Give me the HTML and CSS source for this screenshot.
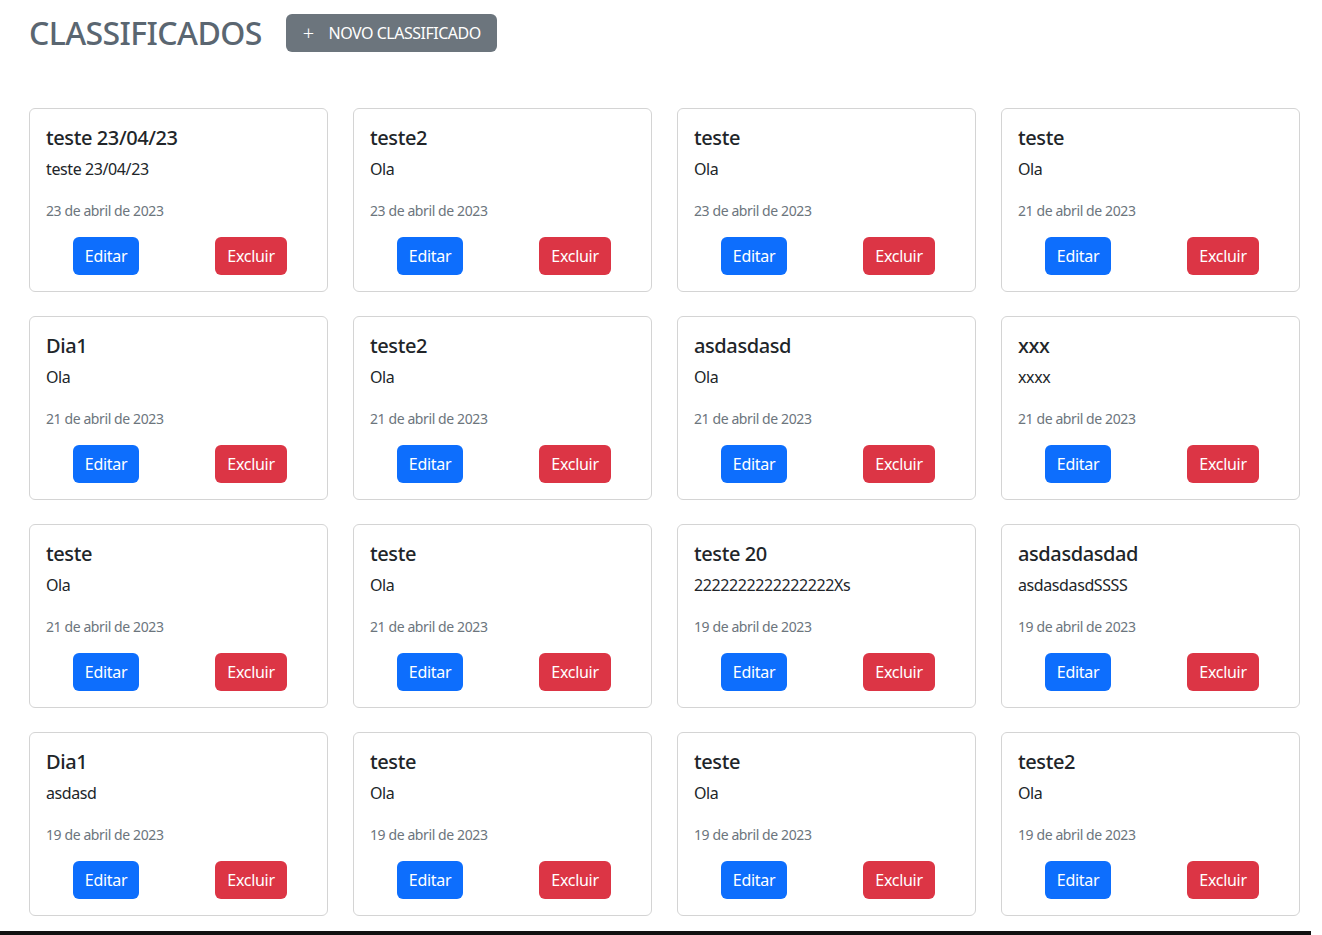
FILE: index.html
```html
<!DOCTYPE html>
<html lang="pt-BR">
<head>
<meta charset="utf-8">
<title>Classificados</title>
<link rel="stylesheet" href="styles.css">
</head>
<body>
<main class="page">
  <header class="top">
    <h1 class="heading">CLASSIFICADOS</h1>
    <button class="btn btn-new"><span class="plus">+</span>NOVO CLASSIFICADO</button>
  </header>
  <section class="grid">
    <article class="card"><h5 class="card-title">teste 23/04/23</h5><p class="card-text">teste 23/04/23</p><p class="card-date"><small>23 de abril de 2023</small></p><div class="actions"><button class="btn btn-edit">Editar</button><button class="btn btn-del">Excluir</button></div></article>
    <article class="card"><h5 class="card-title">teste2</h5><p class="card-text">Ola</p><p class="card-date"><small>23 de abril de 2023</small></p><div class="actions"><button class="btn btn-edit">Editar</button><button class="btn btn-del">Excluir</button></div></article>
    <article class="card"><h5 class="card-title">teste</h5><p class="card-text">Ola</p><p class="card-date"><small>23 de abril de 2023</small></p><div class="actions"><button class="btn btn-edit">Editar</button><button class="btn btn-del">Excluir</button></div></article>
    <article class="card"><h5 class="card-title">teste</h5><p class="card-text">Ola</p><p class="card-date"><small>21 de abril de 2023</small></p><div class="actions"><button class="btn btn-edit">Editar</button><button class="btn btn-del">Excluir</button></div></article>

    <article class="card"><h5 class="card-title">Dia1</h5><p class="card-text">Ola</p><p class="card-date"><small>21 de abril de 2023</small></p><div class="actions"><button class="btn btn-edit">Editar</button><button class="btn btn-del">Excluir</button></div></article>
    <article class="card"><h5 class="card-title">teste2</h5><p class="card-text">Ola</p><p class="card-date"><small>21 de abril de 2023</small></p><div class="actions"><button class="btn btn-edit">Editar</button><button class="btn btn-del">Excluir</button></div></article>
    <article class="card"><h5 class="card-title">asdasdasd</h5><p class="card-text">Ola</p><p class="card-date"><small>21 de abril de 2023</small></p><div class="actions"><button class="btn btn-edit">Editar</button><button class="btn btn-del">Excluir</button></div></article>
    <article class="card"><h5 class="card-title">xxx</h5><p class="card-text">xxxx</p><p class="card-date"><small>21 de abril de 2023</small></p><div class="actions"><button class="btn btn-edit">Editar</button><button class="btn btn-del">Excluir</button></div></article>

    <article class="card"><h5 class="card-title">teste</h5><p class="card-text">Ola</p><p class="card-date"><small>21 de abril de 2023</small></p><div class="actions"><button class="btn btn-edit">Editar</button><button class="btn btn-del">Excluir</button></div></article>
    <article class="card"><h5 class="card-title">teste</h5><p class="card-text">Ola</p><p class="card-date"><small>21 de abril de 2023</small></p><div class="actions"><button class="btn btn-edit">Editar</button><button class="btn btn-del">Excluir</button></div></article>
    <article class="card"><h5 class="card-title">teste 20</h5><p class="card-text">2222222222222222Xs</p><p class="card-date"><small>19 de abril de 2023</small></p><div class="actions"><button class="btn btn-edit">Editar</button><button class="btn btn-del">Excluir</button></div></article>
    <article class="card"><h5 class="card-title">asdasdasdad</h5><p class="card-text">asdasdasdSSSS</p><p class="card-date"><small>19 de abril de 2023</small></p><div class="actions"><button class="btn btn-edit">Editar</button><button class="btn btn-del">Excluir</button></div></article>

    <article class="card"><h5 class="card-title">Dia1</h5><p class="card-text">asdasd</p><p class="card-date"><small>19 de abril de 2023</small></p><div class="actions"><button class="btn btn-edit">Editar</button><button class="btn btn-del">Excluir</button></div></article>
    <article class="card"><h5 class="card-title">teste</h5><p class="card-text">Ola</p><p class="card-date"><small>19 de abril de 2023</small></p><div class="actions"><button class="btn btn-edit">Editar</button><button class="btn btn-del">Excluir</button></div></article>
    <article class="card"><h5 class="card-title">teste</h5><p class="card-text">Ola</p><p class="card-date"><small>19 de abril de 2023</small></p><div class="actions"><button class="btn btn-edit">Editar</button><button class="btn btn-del">Excluir</button></div></article>
    <article class="card"><h5 class="card-title">teste2</h5><p class="card-text">Ola</p><p class="card-date"><small>19 de abril de 2023</small></p><div class="actions"><button class="btn btn-edit">Editar</button><button class="btn btn-del">Excluir</button></div></article>
  </section>
</main>
<footer class="footer"></footer>
</body>
</html>
```
FILE: styles.css
```css
* { box-sizing: border-box; }
html, body { margin: 0; padding: 0; }
body {
  font-family: "Noto Sans", "Open Sans", "DejaVu Sans", sans-serif;
  color: #212529;
  background: #fff;
  font-size: 16px;
  line-height: 1.5;
  width: 1311px;
  overflow: hidden;
}
.page {
  padding: 14px 22px 0 29px;
  height: 931px;
}
.top {
  display: flex;
  align-items: center;
  gap: 24px;
  height: 38px;
}
.heading {
  margin: 0;
  font-size: 32px;
  font-weight: 500;
  color: #5a6671;
  letter-spacing: -0.6px;
  line-height: 38px;
}
.btn {
  font-family: inherit;
  font-size: 16px;
  line-height: 24px;
  padding: 6px 12px;
  border: 1px solid transparent;
  border-radius: 6px;
  color: #fff;
  cursor: pointer;
  letter-spacing: -0.3px;
}
.btn-new {
  background: #6c757d;
  height: 38px;
  padding: 0 15px 0 16px;
  font-size: 16px;
  letter-spacing: -0.5px;
  display: flex;
  align-items: center;
}
.plus { font-size: 20px; margin-right: 15px; font-weight: 300; }
.grid {
  margin-top: 56px;
  display: grid;
  grid-template-columns: repeat(4, 299px);
  column-gap: 25px;
  row-gap: 24px;
}
.card {
  border: 1px solid #d4d4d4;
  border-radius: 6px;
  padding: 16px;
  height: 184px;
  letter-spacing: -0.4px;
}
.card-title {
  margin: 0 0 8px;
  font-size: 20px;
  font-weight: 500;
  line-height: 24px;
  padding-top: 1px;
  height: 24px;
}
.card-text { margin: 0 0 16px; line-height: 24px; height: 24px; }
.card-date { margin: 0 0 16px; line-height: 24px; height: 24px; color: #6c757d; padding-top: 1px; }
.card-date small { font-size: 14px; line-height: 1; }
.actions {
  display: flex;
  padding-left: 27px;
  gap: 76px;
}
.btn-edit { background: #0d6efd; width: 66px; padding: 6px 0; }
.btn-del { background: #dc3545; width: 72px; padding: 6px 0; }
.footer {
  height: 4px;
  width: 1311px;
  background: #111;
}
```
